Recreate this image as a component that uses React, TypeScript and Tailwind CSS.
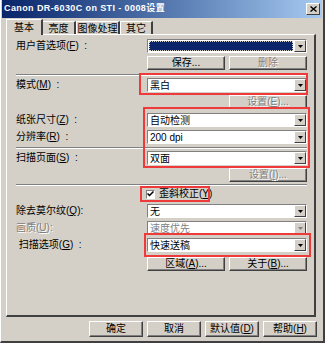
import React from 'react';

// Classic Windows 2000 style scanner settings dialog.

const FONT = { fontFamily: '"Liberation Sans", "Noto Sans CJK SC", sans-serif' };

/** Label text with an underlined access key, e.g. 模式(M). */
const Mn: React.FC<{ text: string; k?: string; tail?: string }> = ({ text, k, tail }) => (
  <>
    {text}
    {k && (
      <>
        (<span className="underline">{k}</span>)
      </>
    )}
    {tail}
  </>
);

const Arrow: React.FC<{ disabled?: boolean }> = ({ disabled }) => (
  <svg width="5" height="3" viewBox="0 0 5 3">
    <path d="M0 0h5L2.5 3z" fill={disabled ? '#808080' : '#000'} />
  </svg>
);

/** Sunken combo box with a raised drop-down button. */
const Combo: React.FC<{ value?: string; disabled?: boolean; selected?: boolean }> = ({ value, disabled, selected }) => (
  <div className="w-[160px] h-[14px] flex border border-t-[#808080] border-l-[#808080] border-b-white border-r-white bg-white">
    <div className="flex-1 min-w-0 p-[1px]">
      {selected ? (
        <div className="h-full bg-[#0a246a] outline-1 outline-dotted outline-[#d4d0c8] -outline-offset-1" />
      ) : (
        <div className={`h-full leading-[11px] text-[10px] pl-[1px] ${disabled ? 'text-[#808080]' : 'text-black'}`}>{value}</div>
      )}
    </div>
    <div className="w-[12px] h-full flex items-center justify-center bg-[#d4d0c8] border border-t-white border-l-white border-b-[#404040] border-r-[#404040]">
      <Arrow disabled={disabled} />
    </div>
  </div>
);

/** Raised push button. */
const Btn: React.FC<{ children: React.ReactNode; w?: string; h?: string; disabled?: boolean }> = ({
  children,
  w = 'w-[78px]',
  h = 'h-[14px]',
  disabled,
}) => (
  <div
    className={`${w} ${h} flex items-center justify-center text-[10px] leading-none bg-[#d4d0c8] border border-t-white border-l-white border-b-[#404040] border-r-[#404040] shadow-[inset_-1px_-1px_0_#808080] ${
      disabled ? 'text-[#808080] [text-shadow:1px_1px_0_#fff]' : 'text-black'
    }`}
  >
    {children}
  </div>
);

const Sep: React.FC<{ mt: string }> = ({ mt }) => (
  <div className={`${mt} ml-[9px] mr-[7px] h-[2px] border-t border-t-[#808080] border-b border-b-white`} />
);

const Row: React.FC<{ label: React.ReactNode; mt: string; disabled?: boolean; children: React.ReactNode }> = ({
  label,
  mt,
  disabled,
  children,
}) => (
  <div className={`${mt} flex items-center h-[14px] pl-[9px] pr-[7px]`}>
    <div
      className={`flex-1 text-[10px] leading-none whitespace-pre ${
        disabled ? 'text-[#808080] [text-shadow:1px_1px_0_#fff]' : 'text-black'
      }`}
    >
      {label}
    </div>
    {children}
  </div>
);

const RedBox: React.FC<{ cls: string }> = ({ cls }) => (
  <div className={`absolute border-2 border-[#ee3a3a] pointer-events-none ${cls}`} />
);

export default function App() {
  return (
    <div
      style={FONT}
      className="relative w-[325px] h-[343px] bg-[#d4d0c8] border-r-2 border-r-[#404040] border-b-2 border-b-[#404040] border-l border-l-white overflow-hidden"
    >
      {/* title bar */}
      <div className="mx-[1px] h-[18px] flex items-center bg-gradient-to-r from-[#0a246a] to-[#a6caf0]">
        <div className="flex-1 pl-[2px] text-white font-bold text-[9px] tracking-[0.4px] whitespace-pre">
          Canon DR-6030C on STI - 0008设置
        </div>
        <div className="mr-[2px] w-[14px] h-[12px] flex items-center justify-center bg-[#d4d0c8] border border-t-white border-l-white border-b-[#404040] border-r-[#404040]">
          <svg width="7" height="6" viewBox="0 0 7 6">
            <path d="M0.5 0.5L6.5 5.5M6.5 0.5L0.5 5.5" stroke="#000" strokeWidth="1.4" />
          </svg>
        </div>
      </div>

      {/* tabs */}
      <div className="flex items-end h-[16px] pl-[5px]">
        <div className="relative z-10 -mb-[1px] w-[37px] h-[16px] flex items-center justify-center text-[10px] bg-[#d4d0c8] border-t border-l border-t-white border-l-white border-r-2 border-r-[#404040]">
          基本
        </div>
        <div className="w-[33px] h-[13px] flex items-center justify-center text-[10px] border-t border-t-white border-r-2 border-r-[#404040]">
          亮度
        </div>
        <div className="w-[44px] h-[13px] flex items-center justify-center text-[10px] border-t border-l border-t-white border-l-white border-r-2 border-r-[#404040]">
          图像处理
        </div>
        <div className="w-[33px] h-[13px] flex items-center justify-center text-[10px] border-t border-l border-t-white border-l-white border-r-2 border-r-[#404040]">
          其它
        </div>
      </div>

      {/* tab page */}
      <div className="ml-[5px] w-[310px] h-[283px] border-t border-l border-t-white border-l-white border-r-2 border-r-[#404040] border-b-2 border-b-[#404040] pt-[1px]">
        <Row mt="mt-[3px]" label={<Mn text="用户首选项" k="F" tail="  :" />}>
          <Combo selected />
        </Row>
        <div className="mt-[3px] flex justify-end gap-[4px] pr-[7px]">
          <Btn>保存...</Btn>
          <Btn disabled>删除</Btn>
        </div>
        <Sep mt="mt-[4px]" />
        <Row mt="mt-[2px]" label={<Mn text="模式" k="M" tail="  :" />}>
          <Combo value="黑白" />
        </Row>
        <div className="mt-[3px] flex justify-end pr-[7px]">
          <Btn disabled>
            设置(<span className="underline">E</span>)...
          </Btn>
        </div>
        <Row mt="mt-[4px]" label={<Mn text="纸张尺寸" k="Z" tail="  :" />}>
          <Combo value="自动检测" />
        </Row>
        <Row mt="mt-[3px]" label={<Mn text="分辨率" k="R" tail="  :" />}>
          <Combo value="200  dpi" />
        </Row>
        <Sep mt="mt-[3px]" />
        <Row mt="mt-[2px]" label={<Mn text="扫描页面" k="S" tail="  :" />}>
          <Combo value="双面" />
        </Row>
        <div className="mt-[3px] flex justify-end pr-[7px]">
          <Btn disabled>
            设置(<span className="underline">I</span>)...
          </Btn>
        </div>
        <Sep mt="mt-[2px]" />
        <div className="mt-[2px] h-[12px] flex items-center pl-[139px] gap-[4px]">
          <div className="w-[9px] h-[9px] bg-white border border-t-[#808080] border-l-[#808080] border-b-white border-r-white flex items-center justify-center">
            <svg width="7" height="6" viewBox="0 0 7 6">
              <path d="M0.5 2.5L2.5 4.5L6.5 0.5" stroke="#000" strokeWidth="1.5" fill="none" />
            </svg>
          </div>
          <div className="text-[10px] leading-none">
            <Mn text="歪斜校正" k="Y" />
          </div>
        </div>
        <Row mt="mt-[4px]" label={<Mn text="除去莫尔纹" k="Q" tail=":" />}>
          <Combo value="无" />
        </Row>
        <Row mt="mt-[3px]" disabled label={<Mn text="画质" k="U" tail=":" />}>
          <Combo value="速度优先" disabled />
        </Row>
        <Row mt="mt-[3px]" label={<Mn text=" 扫描选项" k="G" tail="  :" />}>
          <Combo value="快速送稿" />
        </Row>
        <div className="mt-[5px] flex justify-end gap-[4px] pr-[7px]">
          <Btn>
            区域(<span className="underline">A</span>)...
          </Btn>
          <Btn>
            关于(<span className="underline">B</span>)...
          </Btn>
        </div>
      </div>

      {/* dialog buttons */}
      <div className="mt-[4px] flex justify-end gap-[4px] pr-[6px]">
        <Btn w="w-[54px]" h="h-[16px]">确定</Btn>
        <Btn w="w-[54px]" h="h-[16px]">取消</Btn>
        <Btn w="w-[54px]" h="h-[16px]">
          默认值(<span className="underline">D</span>)
        </Btn>
        <Btn w="w-[54px]" h="h-[16px]">
          帮助(<span className="underline">H</span>)
        </Btn>
      </div>

      {/* red annotation boxes */}
      <RedBox cls="left-[138px] top-[73px] w-[169px] h-[22px]" />
      <RedBox cls="left-[142px] top-[107px] w-[167px] h-[61px]" />
      <RedBox cls="left-[139px] top-[186px] w-[70px] h-[16px]" />
      <RedBox cls="left-[143px] top-[233px] w-[167px] h-[24px]" />
    </div>
  );
}
